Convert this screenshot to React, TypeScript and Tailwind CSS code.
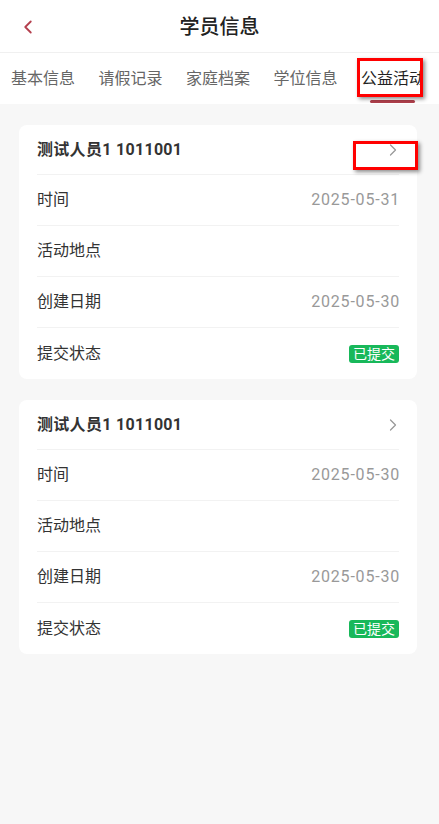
import { ChevronLeft, ChevronRight } from 'lucide-react';

interface Activity {
    name: string;
    time: string;
    place: string;
    created: string;
    status: string;
}

const activities: Activity[] = [
    { name: '测试人员1 1011001', time: '2025-05-31', place: '', created: '2025-05-30', status: '已提交' },
    { name: '测试人员1 1011001', time: '2025-05-30', place: '', created: '2025-05-30', status: '已提交' },
];

const tabs = ['基本信息', '请假记录', '家庭档案', '学位信息', '公益活动'];

function Row({ label, children, last }: { label: string; children?: React.ReactNode; last?: boolean }) {
    return (
        <div className={`flex items-center justify-between h-[51px] ${last ? '' : 'border-b border-[#f2f2f2]'}`}>
            <span className="text-[16px] text-[#333]">{label}</span>
            {children}
        </div>
    );
}

function ActivityCard({ item, marked }: { item: Activity; marked?: boolean }) {
    return (
        <div className="relative bg-white rounded-[8px] px-[18px]">
            <div className="flex items-center justify-between h-[50px] border-b border-[#f2f2f2]">
                <span className="text-[16px] font-bold text-[#333] tracking-[0.3px]">{item.name}</span>
                <ChevronRight size={20} strokeWidth={1.5} className="text-[#999] -mr-[4px]" />
            </div>
            <Row label="时间">
                <span className="text-[16px] text-[#999] tracking-[0.8px] -mr-[1px]">{item.time}</span>
            </Row>
            <Row label="活动地点">
                <span className="text-[16px] text-[#999]">{item.place}</span>
            </Row>
            <Row label="创建日期">
                <span className="text-[16px] text-[#999] tracking-[0.8px] -mr-[1px]">{item.created}</span>
            </Row>
            <Row label="提交状态" last>
                <span className="bg-[#18b85a] text-white text-[14px] leading-[18px] px-[4px] rounded-[3px]">
                    {item.status}
                </span>
            </Row>
            {marked && (
                <div className="absolute left-[334px] top-[16px] w-[65px] h-[29px] border-[3px] border-[#ff0000] shadow-[2px_2px_4px_rgba(0,0,0,0.45)]" />
            )}
        </div>
    );
}

export default function App() {
    return (
        <div
            className="w-[439px] min-h-[824px] bg-[#f7f7f7]"
            style={{ fontFamily: 'Roboto, "Noto Sans CJK SC", sans-serif' }}
        >
            {/* Header */}
            <div className="relative flex items-center justify-center h-[53px] bg-white border-b border-[#f0f0f0]">
                <ChevronLeft size={22} strokeWidth={2} className="absolute left-[17px] top-[16px] text-[#b4404e]" />
                <span className="text-[20px] font-medium text-[#222] pt-[2px]">学员信息</span>
            </div>

            {/* Tabs */}
            <div className="relative h-[51px] bg-white">
                <div className="flex h-full w-[421px] overflow-hidden pl-[11px] gap-[23.5px]">
                    {tabs.map((tab, i) => (
                        <div key={tab} className="relative flex shrink-0 items-center h-full">
                            <span className={`text-[16px] ${i === tabs.length - 1 ? 'text-[#222]' : 'text-[#666]'}`}>{tab}</span>
                            {i === tabs.length - 1 && (
                                <div className="absolute left-[9px] bottom-[1px] w-[45px] h-[3px] rounded-full bg-[#b0404c]" />
                            )}
                        </div>
                    ))}
                </div>
                <div className="absolute left-[357px] top-[5px] w-[66px] h-[39px] border-[3px] border-[#ff0000] shadow-[2px_2px_4px_rgba(0,0,0,0.45)]" />
            </div>

            {/* List */}
            <div className="flex flex-col gap-[21px] px-[19px] w-[436px] pt-[21px] pb-[20px]">
                {activities.map((item, i) => (
                    <ActivityCard key={i} item={item} marked={i === 0} />
                ))}
            </div>
        </div>
    );
}
